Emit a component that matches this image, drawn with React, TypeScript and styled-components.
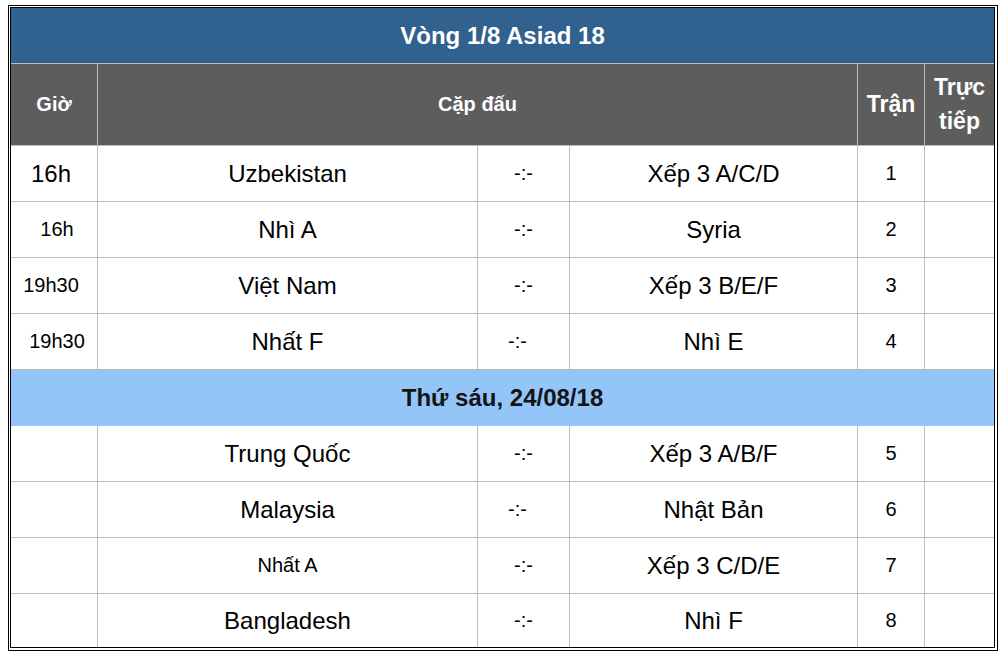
import React from "react";
import styled, { createGlobalStyle } from "styled-components";

/**
 * A single match row of the schedule
 */
interface Match {
  time?: string;
  timeSize?: number;
  timeShift?: number;
  home: string;
  homeSize?: number;
  scoreShift?: number;
  away: string;
  no: number;
}

/**
 * Props for a table cell
 */
interface CellProps {
  $span?: number;
  $height?: number;
  $bg?: string;
  $size?: number;
  $bold?: boolean;
  $color?: string;
  $shift?: number;
  $last?: boolean;
  $noBottom?: boolean;
  $lineHeight?: number;
}

const GlobalStyle = createGlobalStyle`
  body {
    margin: 5px 8px;
    background: #ffffff;
    font-family: "Liberation Sans", Arial, sans-serif;
  }
`;

const Frame = styled.div`
  width: fit-content;
  border: 1px solid #000;
  padding: 1px 2px 2px 1px;
`;

const Inner = styled.div`
  border: 1px solid #000;
`;

const Table = styled.div`
  display: grid;
  grid-template-columns: 87px 380px 92px 288px 67px 69px;
`;

const Cell = styled.div<CellProps>`
  box-sizing: border-box;
  grid-column: span ${props => props.$span ?? 1};
  height: ${props => props.$height ?? 56}px;
  display: flex;
  align-items: center;
  justify-content: center;
  text-align: center;
  background: ${props => props.$bg ?? "#ffffff"};
  color: ${props => props.$color ?? "#000000"};
  font-size: ${props => props.$size ?? 24}px;
  font-weight: ${props => (props.$bold ? 700 : 400)};
  line-height: ${props => props.$lineHeight ?? 1.15};
  border-right: ${props => (props.$last ? "none" : "1px solid #bcbcbc")};
  border-bottom: ${props => (props.$noBottom ? "none" : "1px solid #bcbcbc")};
  padding-left: ${props => Math.max(0, (props.$shift ?? 0) * 2)}px;
  padding-right: ${props => Math.max(0, -(props.$shift ?? 0) * 2)}px;
`;

const TitleCell = styled(Cell)`
  background: #31618f;
  color: #ffffff;
  font-weight: 700;
`;

const HeadCell = styled(Cell)`
  background: #5d5d5d;
  color: #ffffff;
  font-weight: 700;
`;

const DateCell = styled(Cell)`
  background: #94c5f8;
  color: #141414;
  font-weight: 700;
`;

const firstRound: Match[] = [
  { time: "16h", timeSize: 24, timeShift: -3, home: "Uzbekistan", away: "Xếp 3 A/C/D", no: 1 },
  { time: "16h", timeSize: 20, timeShift: 3, home: "Nhì A", away: "Syria", no: 2 },
  { time: "19h30", timeSize: 20, timeShift: -3, home: "Việt Nam", away: "Xếp 3 B/E/F", no: 3 },
  { time: "19h30", timeSize: 20, timeShift: 3, home: "Nhất F", scoreShift: -6, away: "Nhì E", no: 4 },
];

const secondRound: Match[] = [
  { home: "Trung Quốc", away: "Xếp 3 A/B/F", no: 5 },
  { home: "Malaysia", scoreShift: -6, away: "Nhật Bản", no: 6 },
  { home: "Nhất A", homeSize: 20, away: "Xếp 3 C/D/E", no: 7 },
  { home: "Bangladesh", away: "Nhì F", no: 8 },
];

/**
 * Renders the cells of one match row
 */
const MatchRow = ({ match, last }: { match: Match; last?: boolean }) => {
  const height = last ? 53 : 56;
  return (
    <>
      <Cell $height={height} $noBottom={last} $size={match.timeSize ?? 20} $shift={match.timeShift}>
        {match.time ?? ""}
      </Cell>
      <Cell $height={height} $noBottom={last} $size={match.homeSize ?? 24}>{match.home}</Cell>
      <Cell $height={height} $noBottom={last} $size={20} $shift={match.scoreShift}>-:-</Cell>
      <Cell $height={height} $noBottom={last}>{match.away}</Cell>
      <Cell $height={height} $noBottom={last} $size={20}>{match.no}</Cell>
      <Cell $height={height} $noBottom={last} $last />
    </>
  );
};

const App = () => {
  return (
    <>
      <GlobalStyle />
      <Frame>
        <Inner>
          <Table>
            <TitleCell $span={6} $last $size={24}>Vòng 1/8 Asiad 18</TitleCell>

            <HeadCell $height={82} $size={20}>Giờ</HeadCell>
            <HeadCell $height={82} $span={3} $size={20}>Cặp đấu</HeadCell>
            <HeadCell $height={82} $size={23}>Trận</HeadCell>
            <HeadCell $height={82} $size={23} $lineHeight={1.45} $last>Trực tiếp</HeadCell>

            {firstRound.map(match => <MatchRow key={match.no} match={match} />)}

            <DateCell $span={6} $last $noBottom>Thứ sáu, 24/08/18</DateCell>

            {secondRound.map((match, i) => (
              <MatchRow key={match.no} match={match} last={i === secondRound.length - 1} />
            ))}
          </Table>
        </Inner>
      </Frame>
    </>
  );
};

export default App;
